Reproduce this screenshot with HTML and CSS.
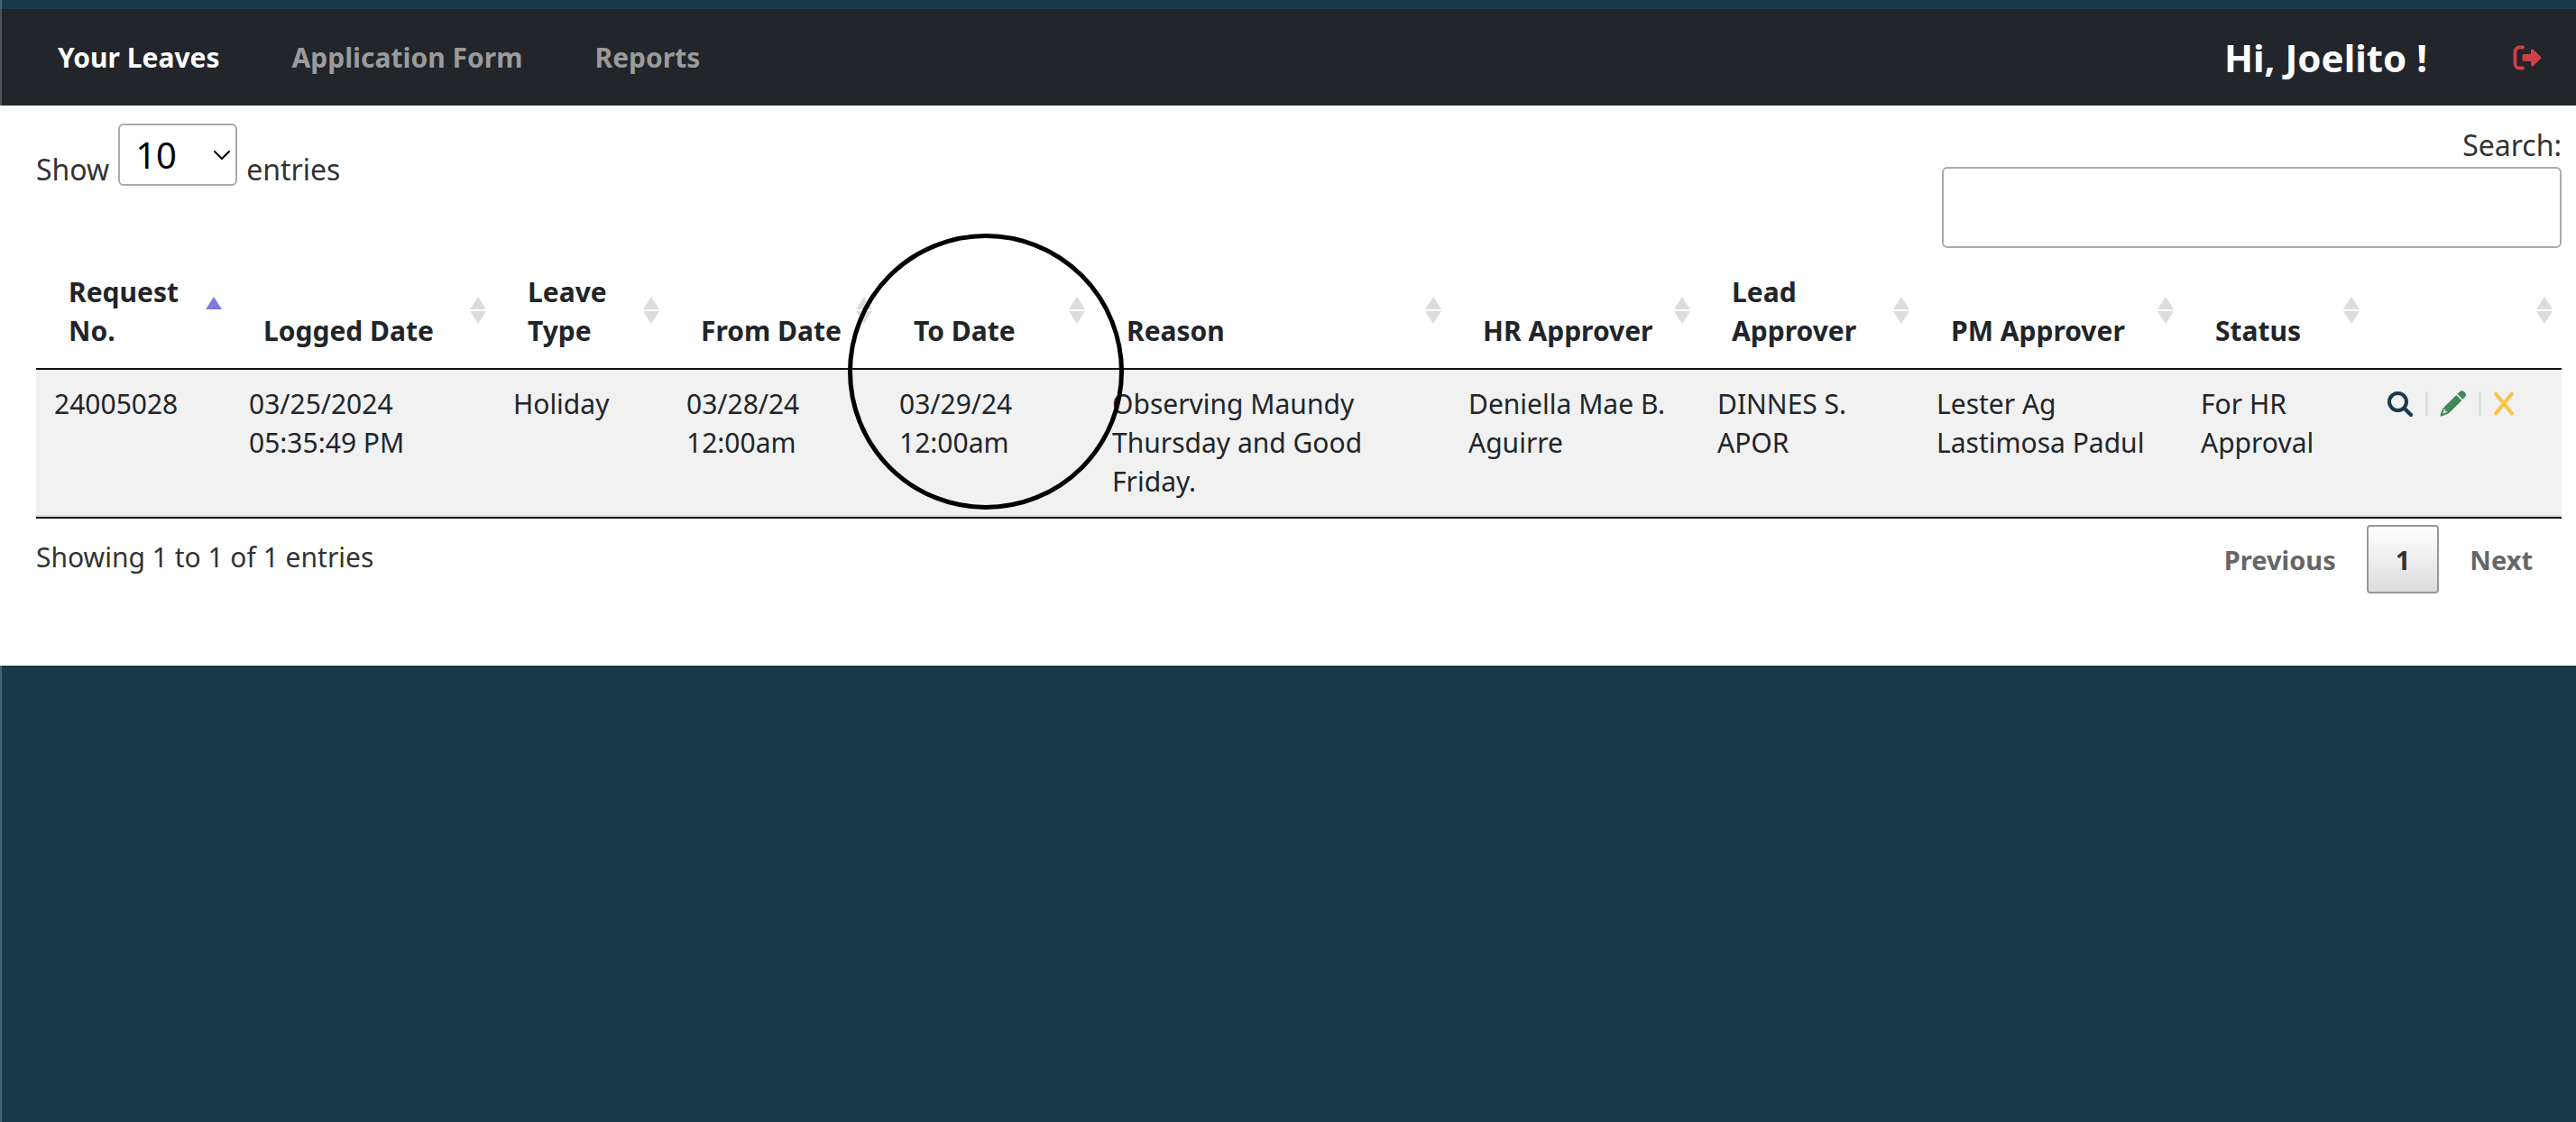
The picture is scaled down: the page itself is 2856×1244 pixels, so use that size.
FILE: index.html
```
<!DOCTYPE html>
<html lang="en">
<head>
<meta charset="utf-8">
<meta name="viewport" content="width=device-width, initial-scale=1">
<title>Your Leaves</title>
<link rel="stylesheet" href="styles.css">
</head>
<body>
<header class="topbar">
  <nav class="menu" aria-label="Main">
    <a class="menu-link active" href="#leaves" aria-current="page">Your Leaves</a>
    <a class="menu-link" href="#form">Application Form</a>
    <a class="menu-link" href="#reports">Reports</a>
  </nav>
  <div class="user">
    <span class="greeting">Hi, Joelito !</span>
    <a class="logout" href="#logout" aria-label="Log out">
      <svg width="32" height="28" viewBox="0 0 32 28" aria-hidden="true">
        <path d="M11 2.500H7a4.500 4.500 0 0 0-4.500 4.500v14a4.500 4.500 0 0 0 4.500 4.500h4" fill="none" stroke="currentColor" stroke-width="3.800" stroke-linecap="round"/>
        <path d="M12.500 10H20V6.200c0-1.600 1.500-2.300 2.700-1.200l8 7.700c.800.700.800 1.900 0 2.600l-8 7.700c-1.200 1.100-2.700.4-2.700-1.200V18h-7.500a2 2 0 0 1-2-2v-4a2 2 0 0 1 2-2z" fill="currentColor"/>
      </svg>
    </a>
  </div>
</header>

<main class="panel">
  <div class="controls">
    <div class="length">
      <label for="length">Show</label>
      <span class="select-wrap">
        <select id="length">
          <option selected>10</option>
          <option>25</option>
          <option>50</option>
          <option>100</option>
        </select>
        <svg class="chevron" width="20" height="12" viewBox="0 0 20 12" aria-hidden="true"><path d="M2 2l8 8 8-8" fill="none" stroke="#000" stroke-width="2" stroke-linecap="round" stroke-linejoin="round"/></svg>
      </span>
      <span>entries</span>
    </div>
    <div class="search">
      <label for="search">Search:</label>
      <input id="search" type="search">
    </div>
  </div>

  <div class="table-wrap">
    <table class="leaves">
      <colgroup>
        <col class="c-request"><col class="c-logged"><col class="c-type"><col class="c-date"><col class="c-date"><col class="c-reason"><col class="c-hr"><col class="c-lead"><col class="c-pm"><col class="c-status"><col class="c-actions">
      </colgroup>
      <thead>
        <tr>
          <th class="sorted" aria-sort="ascending">Request<br>No.</th>
          <th>Logged Date</th>
          <th>Leave<br>Type</th>
          <th>From Date</th>
          <th>To Date<span class="ring"></span></th>
          <th>Reason</th>
          <th>HR Approver</th>
          <th>Lead<br>Approver</th>
          <th>PM Approver</th>
          <th>Status</th>
          <th aria-label="Actions"></th>
        </tr>
      </thead>
      <tbody>
        <tr>
          <td>24005028</td>
          <td>03/25/2024<br>05:35:49 PM</td>
          <td>Holiday</td>
          <td>03/28/24<br>12:00am</td>
          <td>03/29/24<br>12:00am</td>
          <td>Observing Maundy Thursday and Good Friday.</td>
          <td>Deniella Mae B. Aguirre</td>
          <td>DINNES S. APOR</td>
          <td>Lester Ag<br>Lastimosa Padul</td>
          <td>For HR Approval</td>
          <td>
            <div class="actions">
              <button class="view" type="button" aria-label="View">
                <svg width="30" height="30" viewBox="0 0 30 30" aria-hidden="true"><circle cx="12.500" cy="12.500" r="9.500" fill="none" stroke="currentColor" stroke-width="4"/><path d="M20 20l7 7" stroke="currentColor" stroke-width="4.200" stroke-linecap="round"/></svg>
              </button>
              <button class="edit" type="button" aria-label="Edit">
                <svg width="30" height="30" viewBox="0 0 30 30" aria-hidden="true"><path d="M19.500 4.800l2.600-2.600c1.300-1.300 3.600-1.300 4.900.100l1 1c1.300 1.300 1.300 3.500 0 4.800l-2.600 2.600z" fill="currentColor"/><path fill-rule="evenodd" d="M18.300 6l6 6-12.500 12.500c-2 2-5.500 3.800-10.300 5C.800 29.600.400 29.200.600 28.500c.700-4.300 2.400-7.500 5.200-10.300zM5.200 20.800l-1.900 5.700 5.900-1.800-3-.700z" fill="currentColor"/></svg>
              </button>
              <button class="cancel" type="button" aria-label="Cancel">
                <svg width="24" height="30" viewBox="0 0 24 30" aria-hidden="true"><path d="M3 4.500l18 22M21 4.500l-18 22" stroke="currentColor" stroke-width="4" stroke-linecap="round"/></svg>
              </button>
            </div>
          </td>
        </tr>
      </tbody>
    </table>
  </div>

  <div class="footer">
    <div class="info">Showing 1 to 1 of 1 entries</div>
    <div class="pages">
      <button class="page" type="button">Previous</button>
      <button class="page current" type="button" aria-current="page">1</button>
      <button class="page" type="button">Next</button>
    </div>
  </div>
</main>
</body>
</html>
```
FILE: styles.css
```
* {
  box-sizing: border-box;
}

body {
  margin: 0;
  padding-top: 10px;
  background: #173b4a;
  box-shadow: inset 2px 0 0 #4a6571;
  min-height: 100vh;
  color: #212529;
  font-family: "Noto Sans", "Open Sans", sans-serif;
  font-size: 30px;
  line-height: 43px;
}

button,
input,
select {
  font: inherit;
  color: inherit;
}

/* Top bar */
.topbar {
  display: flex;
  justify-content: space-between;
  align-items: center;
  height: 107px;
  padding: 0 38px 0 62px;
  background: #22252a;
  border-left: 2px solid #505358;
  font-weight: 700;
}

.menu {
  display: flex;
  gap: 80px;
}

.menu-link {
  color: #9b9b9c;
  text-decoration: none;
}

.menu-link.active {
  color: #fff;
}

.user {
  display: flex;
  align-items: center;
  gap: 95px;
}

.greeting {
  color: #fff;
  font-size: 42px;
}

.logout {
  display: flex;
  color: #ce4048;
}

/* White panel */
.panel {
  padding: 20px 16px 80px 40px;
  background: #fff;
}

.controls {
  display: flex;
  justify-content: space-between;
  align-items: flex-start;
  color: #333;
  font-size: 32px;
}

.length {
  display: flex;
  align-items: flex-end;
  gap: 10px;
  line-height: 36px;
}

.select-wrap {
  display: flex;
  position: relative;
}

.length select {
  appearance: none;
  width: 132px;
  height: 69px;
  padding: 0 17px;
  border: 2px solid #aaa;
  border-radius: 6px;
  background: #fff;
  color: #000;
  font-size: 40px;
}

.chevron {
  position: absolute;
  right: 7px;
  top: 29px;
  pointer-events: none;
}

.search {
  display: flex;
  flex-direction: column;
  align-items: flex-end;
  width: 687px;
  line-height: 48px;
}

.search input {
  width: 100%;
  height: 90px;
  padding: 10px;
  border: 2px solid #aaa;
  border-radius: 6px;
  background: #fff;
}

/* Leave table */
.table-wrap {
  margin-top: 7px;
}

.leaves {
  width: 100%;
  table-layout: fixed;
  border-collapse: separate;
  border-spacing: 0;
  border-bottom: 2px solid #111;
}

.c-request { width: 216px; }
.c-logged { width: 293px; }
.c-type { width: 192px; }
.c-date { width: 236px; }
.c-reason { width: 395px; }
.c-hr { width: 276px; }
.c-lead { width: 243px; }
.c-pm { width: 293px; }
.c-status { width: 206px; }
.c-actions { width: 214px; }

.leaves th {
  position: relative;
  padding: 20px 20px 20px 36px;
  border-bottom: 2px solid #111;
  text-align: left;
  vertical-align: bottom;
  white-space: nowrap;
}

/* Sort arrows, up and down */
.leaves th::before,
.leaves th::after {
  content: "";
  position: absolute;
  right: 10px;
  width: 18px;
  height: 14px;
  background: #dcdcdc;
}

.leaves th::before {
  top: 47px;
  clip-path: polygon(50% 0, 100% 100%, 0 100%);
}

.leaves th::after {
  top: 63px;
  clip-path: polygon(0 0, 100% 0, 50% 100%);
}

.leaves .sorted::before {
  background: #7c7cd8;
}

.leaves .sorted::after {
  content: none;
}

/* Circle that marks the To Date column */
.ring {
  position: absolute;
  z-index: 1;
  left: -37px;
  top: -23px;
  width: 306px;
  height: 306px;
  border: 5px solid #000;
  border-radius: 50%;
  pointer-events: none;
}

.leaves td {
  padding: 16px 20px;
  background: #f1f1f1;
  border-bottom: 2px solid #dcdcdc;
  vertical-align: top;
}

.actions {
  display: flex;
  align-items: center;
  height: 43px;
}

.actions button {
  display: flex;
  padding: 0;
  border: 0;
  background: none;
}

.actions button + button::before {
  content: "";
  width: 3px;
  height: 27px;
  margin: 2px 13px;
  background: #dcdedc;
}

.actions .view { color: #173b4a; }
.actions .edit { color: #40875a; }
.actions .cancel { color: #fbc344; }

/* Footer */
.footer {
  display: flex;
  justify-content: space-between;
  align-items: flex-start;
  padding-top: 7px;
  color: #333;
}

.info {
  padding-top: 14px;
}

.pages {
  display: flex;
}

.page {
  height: 76px;
  padding: 0 30px;
  border: 2px solid transparent;
  border-radius: 4px;
  background: none;
  color: #666;
  font-size: 29px;
  font-weight: 700;
}

.page.current {
  margin: 0 2px;
  border-color: #979797;
  background: linear-gradient(#fff, #dcdcdc);
  color: #333;
}
```
